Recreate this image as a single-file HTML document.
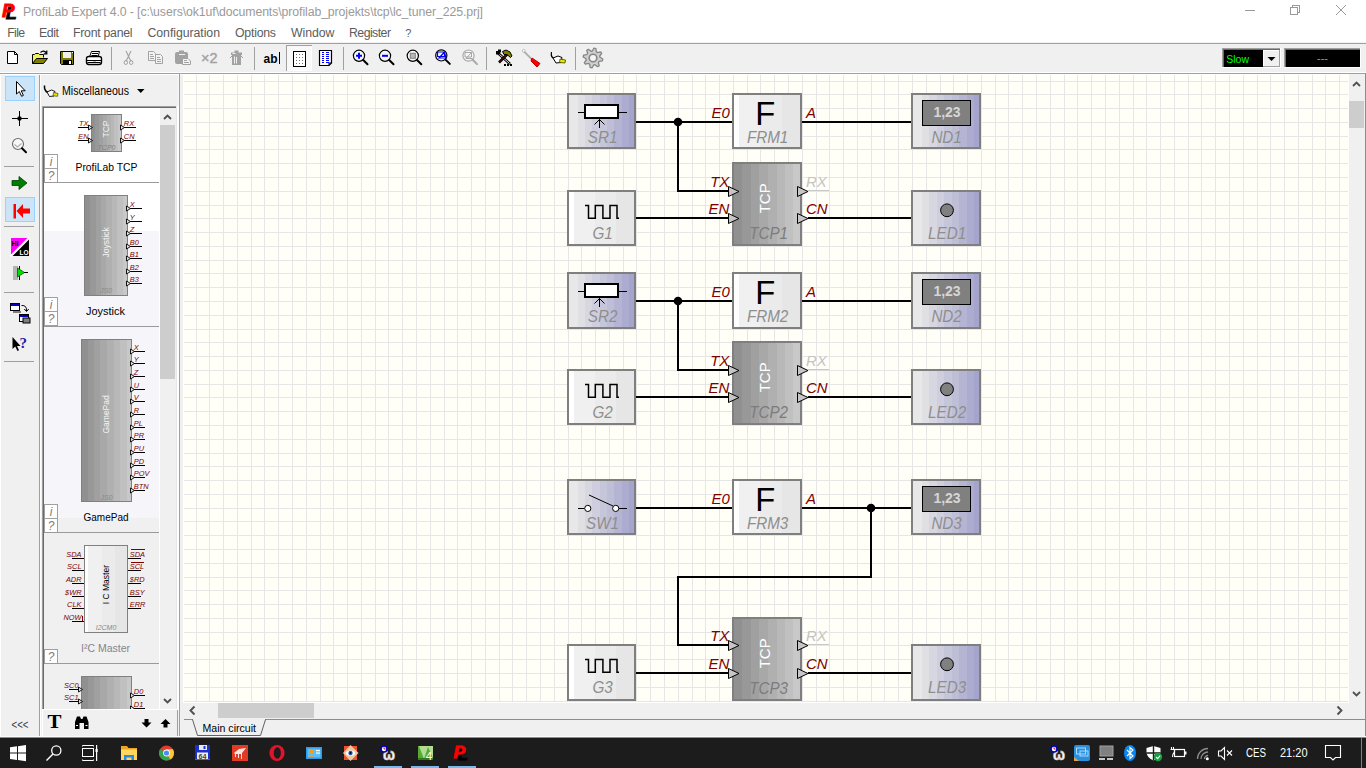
<!DOCTYPE html>
<html lang="en"><head><meta charset="utf-8"><title>ProfiLab Expert 4.0</title>
<style>
html,body{margin:0;padding:0;width:1366px;height:768px;overflow:hidden;background:#f0f0f0}
svg{display:block;font-family:'Liberation Sans',sans-serif}
text{white-space:pre}
</style></head><body>
<svg width="1366" height="768" viewBox="0 0 1366 768">
<defs>
<linearGradient id="gA" x1="0" x2="1" y1="0" y2="0"><stop offset="0.000" stop-color="#e8e8e8"/><stop offset="0.137" stop-color="#e8e8e8"/><stop offset="0.137" stop-color="#e0e0e4"/><stop offset="0.245" stop-color="#e0e0e4"/><stop offset="0.245" stop-color="#d7d7e1"/><stop offset="0.358" stop-color="#d7d7e1"/><stop offset="0.358" stop-color="#cecede"/><stop offset="0.471" stop-color="#cecede"/><stop offset="0.471" stop-color="#c6c6da"/><stop offset="0.589" stop-color="#c6c6da"/><stop offset="0.589" stop-color="#bebed6"/><stop offset="0.692" stop-color="#bebed6"/><stop offset="0.692" stop-color="#b5b5d3"/><stop offset="0.815" stop-color="#b5b5d3"/><stop offset="0.815" stop-color="#acacd0"/><stop offset="0.918" stop-color="#acacd0"/><stop offset="0.918" stop-color="#a4a4cc"/><stop offset="1.000" stop-color="#a4a4cc"/></linearGradient>
<linearGradient id="gB" x1="0" x2="1" y1="0" y2="0"><stop offset="0.000" stop-color="#ffffff"/><stop offset="0.077" stop-color="#ffffff"/><stop offset="0.077" stop-color="#f0f0f0"/><stop offset="0.400" stop-color="#f0f0f0"/><stop offset="0.400" stop-color="#ebebeb"/><stop offset="0.720" stop-color="#ebebeb"/><stop offset="0.720" stop-color="#e6e6e6"/><stop offset="1.000" stop-color="#e6e6e6"/></linearGradient>
<linearGradient id="gC" x1="0" x2="1" y1="0" y2="0"><stop offset="0.000" stop-color="#909090"/><stop offset="0.121" stop-color="#909090"/><stop offset="0.121" stop-color="#989898"/><stop offset="0.258" stop-color="#989898"/><stop offset="0.258" stop-color="#a0a0a0"/><stop offset="0.374" stop-color="#a0a0a0"/><stop offset="0.374" stop-color="#a8a8a8"/><stop offset="0.508" stop-color="#a8a8a8"/><stop offset="0.508" stop-color="#b0b0b0"/><stop offset="0.645" stop-color="#b0b0b0"/><stop offset="0.645" stop-color="#b8b8b8"/><stop offset="0.766" stop-color="#b8b8b8"/><stop offset="0.766" stop-color="#c0c0c0"/><stop offset="0.900" stop-color="#c0c0c0"/><stop offset="0.900" stop-color="#c8c8c8"/><stop offset="1.000" stop-color="#c8c8c8"/></linearGradient>
</defs>
<rect x="0" y="0" width="1366" height="768" fill="#f0f0f0" />
<rect x="0" y="0" width="1366" height="43" fill="#ffffff" />
<rect x="0" y="42" width="1366" height="1" fill="#f2f2f2" />
<rect x="0" y="43" width="1366" height="1" fill="#a0a0a0" />
<rect x="0" y="72" width="1366" height="1" fill="#ffffff" />
<rect x="0" y="73" width="1366" height="1" fill="#a0a0a0" />
<rect x="0" y="74" width="1366" height="1" fill="#ffffff" />
<rect x="1365" y="73" width="1" height="665" fill="#8c8c8c" />
<rect x="0" y="75" width="1" height="662" fill="#ffffff" />
<g font-weight="bold" font-style="italic">
<text x="5.7" y="19" font-size="17" fill="#000" textLength="11" lengthAdjust="spacingAndGlyphs" stroke="#000" stroke-width="0.8">L</text>
<text x="2" y="16.5" font-size="17.5" fill="#ff0000" textLength="12.5" lengthAdjust="spacingAndGlyphs" stroke="#ff0000" stroke-width="0.8">P</text>
</g>
<text x="23" y="16.3" font-size="12.3" fill="#9a9a9a" textLength="460" lengthAdjust="spacing">ProfiLab Expert 4.0 - [c:\users\ok1uf\documents\profilab_projekts\tcp\lc_tuner_225.prj]</text>
<g stroke="#9a9a9a" stroke-width="1" fill="none" shape-rendering="crispEdges">
<path d="M1245 10.5 H1255"/>
<path d="M1290.5 7.5 H1297.5 V14.5 H1290.5 Z M1292.5 7.5 V5.5 H1299.5 V12.5 H1297.5"/>
</g>
<path d="M1336 5 L1346 15 M1346 5 L1336 15" stroke="#9a9a9a" stroke-width="1" fill="none"/>
<text x="7.3" y="37.2" font-size="12.3" fill="#5c5c5c" textLength="17.7" lengthAdjust="spacing">File</text>
<text x="39" y="37.2" font-size="12.3" fill="#5c5c5c" textLength="20" lengthAdjust="spacing">Edit</text>
<text x="73" y="37.2" font-size="12.3" fill="#5c5c5c" textLength="59.5" lengthAdjust="spacing">Front panel</text>
<text x="147.5" y="37.2" font-size="12.3" fill="#5c5c5c" textLength="72.5" lengthAdjust="spacing">Configuration</text>
<text x="235" y="37.2" font-size="12.3" fill="#5c5c5c" textLength="41" lengthAdjust="spacing">Options</text>
<text x="291" y="37.2" font-size="12.3" fill="#5c5c5c" textLength="43.5" lengthAdjust="spacing">Window</text>
<text x="349" y="37.2" font-size="12.3" fill="#5c5c5c" textLength="42" lengthAdjust="spacing">Register</text>
<text x="405.2" y="37.2" font-size="11" fill="#5c5c5c" >?</text>
<rect x="111" y="47" width="1" height="23" fill="#a0a0a0" />
<rect x="254" y="47" width="1" height="23" fill="#a0a0a0" />
<rect x="343" y="47" width="1" height="23" fill="#a0a0a0" />
<rect x="486" y="47" width="1" height="23" fill="#a0a0a0" />
<rect x="575" y="47" width="1" height="23" fill="#a0a0a0" />
<path d="M7.5 51.5 H14.5 L17.5 54.5 V63.5 H7.5 Z" fill="#fff" stroke="#000" stroke-width="1"/>
<path d="M14.5 51.5 V54.5 H17.5" fill="none" stroke="#000" stroke-width="1"/>
<path d="M32.5 63.5 V54.5 H34.5 L35.5 53.5 H38.5 L39.5 54.5 H43.5 V57.5" fill="#f0f060" stroke="#000" stroke-width="1"/>
<path d="M32.5 63.5 L36.5 58.5 H47.5 L43.5 63.5 Z" fill="#808000" stroke="#000" stroke-width="1"/>
<path d="M40.5 52.5 Q43.5 49.500 46.5 53 M46.8 50.5 V53.800 H43.8" fill="none" stroke="#000" stroke-width="1.2"/>
<path d="M60.5 51.5 H73.5 V64.5 H61.5 L60.5 63.5 Z" fill="#808000" stroke="#000" stroke-width="1"/>
<rect x="63" y="52" width="8" height="6" fill="#f0f0f0" />
<rect x="63" y="60" width="9" height="5" fill="#000" />
<rect x="69" y="61" width="2" height="3" fill="#fff" />
<rect x="72" y="52" width="1" height="1" fill="#fff" />
<path d="M89.5 57 L91.5 51.5 H99.5 L98 57" fill="#fff" stroke="#000" stroke-width="1"/>
<path d="M92 53.5 H98 M91.5 55.5 H97.5" stroke="#000" stroke-width="1"/>
<path d="M86.5 58.5 Q86.5 56.5 89 56.5 H99 Q101.5 56.5 101.5 58.5 V62 Q101.5 64.5 99 64.5 H89 Q86.5 64.5 86.5 62 Z" fill="#fff" stroke="#000" stroke-width="1.4"/>
<path d="M87 60.5 H101 M87.5 62.5 H100.5" stroke="#000" stroke-width="1"/>
<rect x="93" y="61" width="3" height="1" fill="#e0e000" />
<path d="M126 51 L131 61.5 M131 51 L126 61.5" stroke="#a2a2a2" stroke-width="1.1" fill="none"/>
<ellipse cx="125.8" cy="62.5" rx="1.7" ry="2" fill="none" stroke="#a2a2a2" stroke-width="1"/><ellipse cx="131.2" cy="62.5" rx="1.7" ry="2" fill="none" stroke="#a2a2a2" stroke-width="1"/>
<path d="M148.5 51.5 H153.5 L155.5 53.5 V60.5 H148.5 Z M155.5 54.5 H160.5 L162.5 56.5 V63.5 H155.5 Z" fill="#f4f4f4" stroke="#a2a2a2" stroke-width="1"/>
<path d="M150 54.5 H153 M150 56.5 H154 M150 58.5 H154 M157 57.5 H160 M157 59.5 H161 M157 61.5 H161" stroke="#a2a2a2" stroke-width="1"/>
<rect x="175" y="52" width="13" height="12" rx="2" fill="#a2a2a2"/><rect x="179" y="50.5" width="5" height="3" fill="#a2a2a2"/><rect x="179" y="54" width="6" height="1" fill="#f0f0f0"/>
<path d="M182.5 58.5 H188 L190.5 61 V64.5 H182.5 Z" fill="#f4f4f4" stroke="#a2a2a2" stroke-width="1"/><path d="M184 60.5 H187 M184 62.5 H189" stroke="#a2a2a2" stroke-width="1"/>
<text x="201" y="63.3" font-size="15" fill="#a2a2a2" textLength="16.5" lengthAdjust="spacingAndGlyphs" stroke="#a2a2a2" stroke-width="0.4">×2</text>
<path d="M232 55 H241 V65 H232 Z M231 52.5 H242 V55 H231 Z M234.5 50.5 H238.5 V52.5 H234.5 Z" fill="#a2a2a2"/>
<path d="M230 58 L232 56 M243 58 L241 56" stroke="#a2a2a2" stroke-width="1"/>
<path d="M234.5 56.5 V63.5 M236.5 57 V63.5" stroke="#f0f0f0" stroke-width="1"/><rect x="232.5" y="53" width="3" height="1" fill="#f0f0f0"/>
<text x="263.5" y="62.8" font-size="12.5" fill="#000" font-weight="bold" textLength="14" lengthAdjust="spacingAndGlyphs">ab</text>
<rect x="279" y="52" width="1" height="12" fill="#000" />
<rect x="286" y="45" width="26" height="26" fill="#f8f8f8" />
<rect x="286" y="45" width="26" height="1" fill="#a0a0a0" />
<rect x="286" y="45" width="1" height="26" fill="#a0a0a0" />
<rect x="311" y="46" width="1" height="25" fill="#fff" />
<rect x="287" y="70" width="25" height="1" fill="#fff" />
<rect x="293.5" y="51.5" width="12" height="15" fill="#fff" stroke="#000" stroke-width="1"/>
<rect x="296" y="54" width="1" height="1" fill="#707070" />
<rect x="299" y="54" width="1" height="1" fill="#707070" />
<rect x="302" y="54" width="1" height="1" fill="#707070" />
<rect x="296" y="57" width="1" height="1" fill="#707070" />
<rect x="299" y="57" width="1" height="1" fill="#707070" />
<rect x="302" y="57" width="1" height="1" fill="#707070" />
<rect x="296" y="60" width="1" height="1" fill="#707070" />
<rect x="299" y="60" width="1" height="1" fill="#707070" />
<rect x="302" y="60" width="1" height="1" fill="#707070" />
<rect x="296" y="63" width="1" height="1" fill="#707070" />
<rect x="299" y="63" width="1" height="1" fill="#707070" />
<rect x="302" y="63" width="1" height="1" fill="#707070" />
<path d="M319.5 50.500 H331.5 V63 L329 65.5 H319.5 Z" fill="#fff" stroke="#000" stroke-width="1.2"/>
<path d="M329 65.5 V63 H331.5" fill="none" stroke="#000" stroke-width="1"/>
<rect x="322" y="52" width="2" height="1" fill="#0000ff" />
<rect x="326" y="52" width="3" height="1" fill="#0000ff" />
<rect x="322" y="54" width="2" height="1" fill="#0000ff" />
<rect x="326" y="54" width="3" height="1" fill="#0000ff" />
<rect x="322" y="56" width="2" height="1" fill="#0000ff" />
<rect x="326" y="56" width="3" height="1" fill="#0000ff" />
<rect x="322" y="58" width="2" height="1" fill="#0000ff" />
<rect x="326" y="58" width="3" height="1" fill="#0000ff" />
<rect x="322" y="60" width="2" height="1" fill="#0000ff" />
<rect x="326" y="60" width="3" height="1" fill="#0000ff" />
<rect x="322" y="62" width="2" height="1" fill="#0000ff" />
<rect x="326" y="62" width="3" height="1" fill="#0000ff" />
<circle cx="359" cy="55.8" r="5.6" fill="#f6f6f6" stroke="#000" stroke-width="1.2"/>
<path d="M363.2 60.0 L367.5 64.3" stroke="#000" stroke-width="2" stroke-linecap="round"/>
<path d="M356 55.8 H362 M359 52.8 V58.8" stroke="#0000ff" stroke-width="2"/>
<circle cx="385" cy="55.8" r="5.6" fill="#f6f6f6" stroke="#000" stroke-width="1.2"/>
<path d="M389.2 60.0 L393.5 64.3" stroke="#000" stroke-width="2" stroke-linecap="round"/>
<path d="M382 55.8 H388" stroke="#0000ff" stroke-width="2"/>
<circle cx="412.8" cy="55.8" r="5.6" fill="#f6f6f6" stroke="#000" stroke-width="1.2"/>
<path d="M417.0 60.0 L421.3 64.3" stroke="#000" stroke-width="2" stroke-linecap="round"/>
<rect x="410.3" y="53.3" width="5" height="5" fill="#b8b8b8" stroke="#808080" stroke-width="1"/>
<circle cx="441.3" cy="55.4" r="5.6" fill="#f6f6f6" stroke="#000" stroke-width="1.2"/>
<path d="M445.5 59.6 L449.8 63.9" stroke="#000" stroke-width="2" stroke-linecap="round"/>
<path d="M437.5 52 H444.5 V56.5 H437.5 Z M444.5 52 L439 58 H446 Z" fill="none" stroke="#0000ff" stroke-width="1.2"/>
<circle cx="468.5" cy="55.6" r="5.6" fill="#f6f6f6" stroke="#a8a8a8" stroke-width="1.2"/>
<path d="M472.7 59.800000000000004 L477.0 64.1" stroke="#a8a8a8" stroke-width="2" stroke-linecap="round"/>
<path d="M465 52.5 H471.5 V57 H465 Z M471.5 52.5 L466 58.5 H472.5" fill="none" stroke="#a8a8a8" stroke-width="1"/>
<path d="M498 53 L510 64" stroke="#000" stroke-width="2.6"/><path d="M498.5 53.5 L509.5 63.5" stroke="#fff" stroke-width="0.9"/>
<path d="M496 51 h2 v-1.5 h3 v3 h-1 v2 h-4 z" fill="#000"/>
<path d="M499 62.5 L508 53.5" stroke="#000" stroke-width="2.6"/><path d="M499.5 62 L507.5 54" stroke="#a00000" stroke-width="1"/>
<path d="M502.5 51.5 L506 50 L510 52 L512 56 L510.5 57.5 L507 54.5 L504 54.5 Z" fill="#808000" stroke="#000" stroke-width="1"/>
<rect x="504" y="64" width="2" height="2" fill="#000" />
<rect x="507" y="64" width="2" height="2" fill="#000" />
<rect x="510" y="64" width="2" height="2" fill="#000" />
<path d="M523.5 51 L532 59.5" stroke="#b0b0b0" stroke-width="1.8" stroke-linecap="round"/><circle cx="523.7" cy="50.8" r="1.4" fill="#fff" stroke="#b0b0b0" stroke-width="0.8"/>
<path d="M532 58 L540 63.5 L537 67 L531 61 Z" fill="#ff0000" stroke="#c00000" stroke-width="1" stroke-linejoin="round"/>
<path d="M551.5 52 Q550.5 57 554 58.5 L558 61.5" fill="none" stroke="#000" stroke-width="1.2"/>
<path d="M553 58 L558 56 L562 57.5 L561 62.5 L556 63 Z" fill="#fff" stroke="#000" stroke-width="1"/>
<path d="M560 59 L565.5 60 L565 63 L559.5 62.5 Z" fill="#e8e800" stroke="#404000" stroke-width="0.8"/>
<path d="M602.8 59.0 L602.4 60.9 L599.2 61.3 L598.4 62.5 L599.2 65.6 L597.6 66.7 L595.0 64.7 L593.7 65.0 L592.0 67.8 L590.1 67.4 L589.7 64.2 L588.5 63.4 L585.4 64.2 L584.3 62.6 L586.3 60.0 L586.0 58.7 L583.2 57.0 L583.6 55.1 L586.8 54.7 L587.6 53.5 L586.8 50.4 L588.4 49.3 L591.0 51.3 L592.3 51.0 L594.0 48.2 L595.9 48.6 L596.3 51.8 L597.5 52.6 L600.6 51.8 L601.7 53.4 L599.7 56.0 L600.0 57.3 Z" fill="#cfcfcf" stroke="#858585" stroke-width="1.3" stroke-linejoin="round"/>
<circle cx="593" cy="58" r="3.8" fill="#f4f4f4" stroke="#858585" stroke-width="1.6"/>
<rect x="1222" y="48" width="59" height="20" fill="#ffffff" />
<rect x="1222" y="48" width="58" height="1" fill="#a0a0a0" />
<rect x="1222" y="48" width="1" height="19" fill="#a0a0a0" />
<rect x="1223" y="49" width="57" height="1" fill="#696969" />
<rect x="1223" y="49" width="1" height="18" fill="#696969" />
<rect x="1224" y="50" width="56" height="17" fill="#000" />
<rect x="1263" y="50" width="17" height="17" fill="#a0a0a0" />
<rect x="1263" y="50" width="16" height="16" fill="#ffffff" />
<rect x="1264" y="51" width="15" height="15" fill="#f0f0f0" />
<path d="M1267.5 57 H1275.5 L1271.5 61 Z" fill="#000"/>
<text x="1226.3" y="62.5" font-size="11.5" fill="#00ff00" textLength="22.7" lengthAdjust="spacingAndGlyphs">Slow</text>
<rect x="1284" y="48" width="77" height="20" fill="#ffffff" />
<rect x="1284" y="48" width="76" height="1" fill="#a0a0a0" />
<rect x="1284" y="48" width="1" height="19" fill="#a0a0a0" />
<rect x="1285" y="49" width="75" height="1" fill="#696969" />
<rect x="1285" y="49" width="1" height="18" fill="#696969" />
<rect x="1286" y="50" width="74" height="17" fill="#000" />
<text x="1322.5" y="62" font-size="11" fill="#00ff00" text-anchor="middle" >---</text>
<rect x="39" y="75" width="1" height="663" fill="#a0a0a0" />
<rect x="40" y="75" width="1" height="663" fill="#ffffff" />
<rect x="5.5" y="76.5" width="29" height="24" fill="#cce4f7" stroke="#99d1ff" stroke-width="1"/>
<path d="M16.5 81.5 V94 L19.3 91.5 L21.6 96.3 L23.4 95.4 L21.2 90.8 H25.2 Z" fill="#fff" stroke="#000" stroke-width="1" stroke-linejoin="miter"/>
<path d="M12 118.5 H28 M19.5 111 V126" stroke="#000" stroke-width="1"/><circle cx="19.5" cy="118.5" r="2.2" fill="#000"/>
<circle cx="18" cy="144" r="5.5" fill="#f8f8f8" stroke="#6a6a6a" stroke-width="1.1"/><path d="M14.5 144.5 L17.5 147 L21.5 143.5" fill="none" stroke="#b0b0b0" stroke-width="1.2"/><path d="M22 148.2 L26 152.2" stroke="#000" stroke-width="2" stroke-linecap="round"/>
<rect x="4" y="166" width="30" height="1" fill="#a0a0a0" />
<path d="M12 180.5 H19 V176.5 L27 183 L19 189.5 V185.5 H12 Z" fill="#008000" stroke="#004000" stroke-width="0.8"/>
<rect x="5.5" y="197.5" width="29" height="24" fill="#cce4f7" stroke="#99d1ff" stroke-width="1"/>
<path d="M30 208.5 H23 V204 L16.5 211 L23 218 V213.5 H30 Z" fill="#ff0000"/><rect x="13.5" y="204" width="2.5" height="14.5" fill="#ff0000"/>
<rect x="4" y="226" width="30" height="1" fill="#a0a0a0" />
<path d="M11 238 H29 L11 256 Z" fill="#ff00ff"/><path d="M29 238 V256 H11 Z" fill="#000"/><path d="M29.5 237.5 L10.5 256.5" stroke="#fff" stroke-width="2.2"/>
<text x="11.5" y="246" font-size="7" fill="#000" font-weight="bold" textLength="7" lengthAdjust="spacingAndGlyphs">HI</text>
<text x="19.5" y="255.3" font-size="7" fill="#fff" font-weight="bold" textLength="9" lengthAdjust="spacingAndGlyphs">LO</text>
<rect x="13" y="266" width="5" height="14" fill="#b4b4b4" />
<rect x="19" y="266" width="1" height="14" fill="#000" />
<path d="M17.5 268 L24.5 272.5 L17.5 277 Z" fill="#00e000" stroke="#006000" stroke-width="0.8"/>
<rect x="24" y="272" width="4" height="1" fill="#000" />
<rect x="4" y="292" width="30" height="1" fill="#a0a0a0" />
<rect x="10.5" y="303.5" width="9" height="7" fill="#fff" stroke="#000"/><rect x="11" y="304" width="8" height="2" fill="#0000c0"/><rect x="13" y="311" width="8" height="2" fill="#808080"/>
<rect x="19.5" y="314.5" width="9" height="7" fill="#fff" stroke="#000"/><rect x="20" y="315" width="8" height="2" fill="#0000c0"/><rect x="23" y="318" width="7" height="5" fill="#808080" stroke="#000" stroke-width="1"/>
<path d="M21.5 305.5 Q27 305 26.5 311 M24.3 309 L26.5 311.5 L28.7 309" fill="none" stroke="#000" stroke-width="1"/>
<path d="M12.5 337 V349 L15.2 346.5 L17.5 351 L19 350.2 L17 346 H20.5 Z" fill="#000"/>
<text x="19.5" y="348" font-size="15" fill="#2020a0" font-weight="bold" font-family="Liberation Serif, serif">?</text>
<rect x="4" y="361" width="30" height="1" fill="#a0a0a0" />
<text x="11.5" y="728.5" font-size="12" fill="#404040" textLength="17" lengthAdjust="spacingAndGlyphs">&lt;&lt;&lt;</text>
<path d="M44.5 85.500 Q44 91 48 92.500 L52 95.500" fill="none" stroke="#000" stroke-width="1.5"/><path d="M47 92 L51.5 90 L55 91.5 L54 96 L49.5 96.5 Z" fill="#fff" stroke="#000" stroke-width="0.9"/><path d="M53.5 92.5 L58 93.5 L57.5 96.3 L53 95.8 Z" fill="#e8e800" stroke="#404000" stroke-width="0.7"/>
<text x="62" y="94.9" font-size="12" fill="#000" textLength="67" lengthAdjust="spacingAndGlyphs">Miscellaneous</text>
<path d="M137 89 H144.5 L140.75 93 Z" fill="#000"/>
<rect x="42" y="106" width="135" height="603" fill="#ffffff" />
<rect x="44" y="108" width="116" height="123" fill="#ffffff" />
<rect x="44" y="231" width="116" height="287" fill="#f5f5fa" />
<rect x="44" y="518" width="116" height="191" fill="#f0f0f0" />
<rect x="42" y="106" width="135" height="1" fill="#a0a0a0" />
<rect x="42" y="106" width="1" height="603" fill="#a0a0a0" />
<rect x="43" y="107" width="133" height="1" fill="#696969" />
<rect x="43" y="107" width="1" height="602" fill="#696969" />
<rect x="176" y="106" width="1" height="603" fill="#e6e6e6" />
<rect x="177" y="106" width="2" height="605" fill="#ffffff" />
<rect x="178" y="75" width="1" height="31" fill="#f8f8f8" />
<rect x="159" y="108" width="1" height="601" fill="#ffffff" />
<rect x="160" y="108" width="16" height="601" fill="#f0f0f0" />
<rect x="160" y="125" width="15" height="254" fill="#cdcdcd" />
<path d="M164 119 L167.5 115.5 L171 119" fill="none" stroke="#505050" stroke-width="1.9"/>
<path d="M164 699 L167.5 702.5 L171 699" fill="none" stroke="#505050" stroke-width="1.9"/>
<rect x="91.5" y="114.5" width="30" height="37" fill="url(#gC)" stroke="#808080" stroke-width="1"/>
<text transform="translate(109,129) rotate(-90)" font-size="8.5" fill="#e8f4f4" text-anchor="middle">TCP</text>
<text x="106.5" y="150" font-size="7" fill="#808080" text-anchor="middle" font-style="italic" >TCP0</text>
<rect x="78" y="127.0" width="13" height="1" fill="#000" />
<path d="M88.5 125.0 L92.5 127.5 L88.5 130.0 Z" fill="#e0e0e0" stroke="#000" stroke-width="0.9"/>
<text x="88.5" y="125.5" font-size="7.4" fill="#800000" text-anchor="end" font-style="italic" >TX</text>
<rect x="78" y="140.0" width="13" height="1" fill="#000" />
<path d="M88.5 138.0 L92.5 140.5 L88.5 143.0 Z" fill="#e0e0e0" stroke="#000" stroke-width="0.9"/>
<text x="88.5" y="138.5" font-size="7.4" fill="#800000" text-anchor="end" font-style="italic" >EN</text>
<rect x="122" y="127.0" width="14" height="1" fill="#000" />
<path d="M120.5 125.0 L124.5 127.5 L120.5 130.0 Z" fill="#e0e0e0" stroke="#000" stroke-width="0.9"/>
<text x="123.8" y="125.5" font-size="7.4" fill="#800000" font-style="italic" >RX</text>
<rect x="122" y="140.0" width="14" height="1" fill="#000" />
<path d="M120.5 138.0 L124.5 140.5 L120.5 143.0 Z" fill="#e0e0e0" stroke="#000" stroke-width="0.9"/>
<text x="123.8" y="138.5" font-size="7.4" fill="#800000" font-style="italic" >CN</text>
<rect x="44.5" y="154.5" width="13" height="14" fill="#fff" stroke="#a0a0a0" stroke-width="1"/>
<text x="51" y="165.8" font-size="12" fill="#8a7a70" text-anchor="middle" font-style="italic" >i</text>
<rect x="44.5" y="168.5" width="13" height="14" fill="#fff" stroke="#a0a0a0" stroke-width="1"/>
<text x="51" y="179.8" font-size="12" fill="#8a7a70" text-anchor="middle" font-style="italic" >?</text>
<rect x="44" y="182" width="115" height="1" fill="#9a9a9a" />
<text x="106.5" y="170.8" font-size="11.3" fill="#000" text-anchor="middle" textLength="62" lengthAdjust="spacingAndGlyphs">ProfiLab TCP</text>
<rect x="84.5" y="195.5" width="43" height="100" fill="url(#gC)" stroke="#808080" stroke-width="1"/>
<text transform="translate(109.2,242.3) rotate(-90)" font-size="8.5" fill="#f4f4f4" text-anchor="middle">Joystick</text>
<text x="106" y="293" font-size="7" fill="#8a8a8a" text-anchor="middle" font-style="italic" >JS0</text>
<rect x="128" y="208.0" width="14" height="1" fill="#000" />
<path d="M126.5 206.0 L130.5 208.5 L126.5 211.0 Z" fill="#e0e0e0" stroke="#000" stroke-width="0.9"/>
<text x="129.8" y="206.5" font-size="7.4" fill="#800000" font-style="italic" >X</text>
<rect x="128" y="221.0" width="14" height="1" fill="#000" />
<path d="M126.5 219.0 L130.5 221.5 L126.5 224.0 Z" fill="#e0e0e0" stroke="#000" stroke-width="0.9"/>
<text x="129.8" y="219.5" font-size="7.4" fill="#800000" font-style="italic" >Y</text>
<rect x="128" y="233.0" width="14" height="1" fill="#000" />
<path d="M126.5 231.0 L130.5 233.5 L126.5 236.0 Z" fill="#e0e0e0" stroke="#000" stroke-width="0.9"/>
<text x="129.8" y="231.5" font-size="7.4" fill="#800000" font-style="italic" >Z</text>
<rect x="128" y="246.0" width="14" height="1" fill="#000" />
<path d="M126.5 244.0 L130.5 246.5 L126.5 249.0 Z" fill="#e0e0e0" stroke="#000" stroke-width="0.9"/>
<text x="129.8" y="244.5" font-size="7.4" fill="#800000" font-style="italic" >B0</text>
<rect x="128" y="258.0" width="14" height="1" fill="#000" />
<path d="M126.5 256.0 L130.5 258.5 L126.5 261.0 Z" fill="#e0e0e0" stroke="#000" stroke-width="0.9"/>
<text x="129.8" y="256.5" font-size="7.4" fill="#800000" font-style="italic" >B1</text>
<rect x="128" y="271.0" width="14" height="1" fill="#000" />
<path d="M126.5 269.0 L130.5 271.5 L126.5 274.0 Z" fill="#e0e0e0" stroke="#000" stroke-width="0.9"/>
<text x="129.8" y="269.5" font-size="7.4" fill="#800000" font-style="italic" >B2</text>
<rect x="128" y="283.0" width="14" height="1" fill="#000" />
<path d="M126.5 281.0 L130.5 283.5 L126.5 286.0 Z" fill="#e0e0e0" stroke="#000" stroke-width="0.9"/>
<text x="129.8" y="281.5" font-size="7.4" fill="#800000" font-style="italic" >B3</text>
<rect x="44.5" y="297.5" width="13" height="14" fill="#fff" stroke="#a0a0a0" stroke-width="1"/>
<text x="51" y="308.8" font-size="12" fill="#8a7a70" text-anchor="middle" font-style="italic" >i</text>
<rect x="44.5" y="311.5" width="13" height="14" fill="#fff" stroke="#a0a0a0" stroke-width="1"/>
<text x="51" y="322.8" font-size="12" fill="#8a7a70" text-anchor="middle" font-style="italic" >?</text>
<rect x="44" y="326" width="115" height="1" fill="#9a9a9a" />
<text x="105.5" y="314.8" font-size="11.3" fill="#000" text-anchor="middle" textLength="39" lengthAdjust="spacingAndGlyphs">Joystick</text>
<rect x="81.5" y="339.5" width="50" height="162" fill="url(#gC)" stroke="#808080" stroke-width="1"/>
<text transform="translate(109.2,414.4) rotate(-90)" font-size="8.5" fill="#f4f4f4" text-anchor="middle">GamePad</text>
<text x="106.5" y="500" font-size="7" fill="#8a8a8a" text-anchor="middle" font-style="italic" >JS0</text>
<rect x="132" y="351.0" width="13" height="1" fill="#000" />
<path d="M130.5 349.0 L134.5 351.5 L130.5 354.0 Z" fill="#e0e0e0" stroke="#000" stroke-width="0.9"/>
<text x="133.8" y="349.5" font-size="7.4" fill="#800000" font-style="italic" >X</text>
<rect x="132" y="363.0" width="13" height="1" fill="#000" />
<path d="M130.5 361.0 L134.5 363.5 L130.5 366.0 Z" fill="#e0e0e0" stroke="#000" stroke-width="0.9"/>
<text x="133.8" y="361.5" font-size="7.4" fill="#800000" font-style="italic" >Y</text>
<rect x="132" y="376.0" width="13" height="1" fill="#000" />
<path d="M130.5 374.0 L134.5 376.5 L130.5 379.0 Z" fill="#e0e0e0" stroke="#000" stroke-width="0.9"/>
<text x="133.8" y="374.5" font-size="7.4" fill="#800000" font-style="italic" >Z</text>
<rect x="132" y="389.0" width="13" height="1" fill="#000" />
<path d="M130.5 387.0 L134.5 389.5 L130.5 392.0 Z" fill="#e0e0e0" stroke="#000" stroke-width="0.9"/>
<text x="133.8" y="387.5" font-size="7.4" fill="#800000" font-style="italic" >U</text>
<rect x="132" y="401.0" width="13" height="1" fill="#000" />
<path d="M130.5 399.0 L134.5 401.5 L130.5 404.0 Z" fill="#e0e0e0" stroke="#000" stroke-width="0.9"/>
<text x="133.8" y="399.5" font-size="7.4" fill="#800000" font-style="italic" >V</text>
<rect x="132" y="414.0" width="13" height="1" fill="#000" />
<path d="M130.5 412.0 L134.5 414.5 L130.5 417.0 Z" fill="#e0e0e0" stroke="#000" stroke-width="0.9"/>
<text x="133.8" y="412.5" font-size="7.4" fill="#800000" font-style="italic" >R</text>
<rect x="132" y="427.0" width="13" height="1" fill="#000" />
<path d="M130.5 425.0 L134.5 427.5 L130.5 430.0 Z" fill="#e0e0e0" stroke="#000" stroke-width="0.9"/>
<text x="133.8" y="425.5" font-size="7.4" fill="#800000" font-style="italic" >PL</text>
<rect x="132" y="439.0" width="13" height="1" fill="#000" />
<path d="M130.5 437.0 L134.5 439.5 L130.5 442.0 Z" fill="#e0e0e0" stroke="#000" stroke-width="0.9"/>
<text x="133.8" y="437.5" font-size="7.4" fill="#800000" font-style="italic" >PR</text>
<rect x="132" y="452.0" width="13" height="1" fill="#000" />
<path d="M130.5 450.0 L134.5 452.5 L130.5 455.0 Z" fill="#e0e0e0" stroke="#000" stroke-width="0.9"/>
<text x="133.8" y="450.5" font-size="7.4" fill="#800000" font-style="italic" >PU</text>
<rect x="132" y="465.0" width="13" height="1" fill="#000" />
<path d="M130.5 463.0 L134.5 465.5 L130.5 468.0 Z" fill="#e0e0e0" stroke="#000" stroke-width="0.9"/>
<text x="133.8" y="463.5" font-size="7.4" fill="#800000" font-style="italic" >PD</text>
<rect x="132" y="477.0" width="13" height="1" fill="#000" />
<path d="M130.5 475.0 L134.5 477.5 L130.5 480.0 Z" fill="#e0e0e0" stroke="#000" stroke-width="0.9"/>
<text x="133.8" y="475.5" font-size="7.4" fill="#800000" font-style="italic" >POV</text>
<rect x="132" y="490.0" width="13" height="1" fill="#000" />
<path d="M130.5 488.0 L134.5 490.5 L130.5 493.0 Z" fill="#e0e0e0" stroke="#000" stroke-width="0.9"/>
<text x="133.8" y="488.5" font-size="7.4" fill="#800000" font-style="italic" >BTN</text>
<rect x="44.5" y="504.5" width="13" height="14" fill="#fff" stroke="#a0a0a0" stroke-width="1"/>
<text x="51" y="515.8" font-size="12" fill="#8a7a70" text-anchor="middle" font-style="italic" >i</text>
<rect x="44.5" y="518.5" width="13" height="14" fill="#fff" stroke="#a0a0a0" stroke-width="1"/>
<text x="51" y="529.8" font-size="12" fill="#8a7a70" text-anchor="middle" font-style="italic" >?</text>
<rect x="44" y="532" width="115" height="1" fill="#9a9a9a" />
<text x="106" y="521" font-size="11.3" fill="#000" text-anchor="middle" textLength="45" lengthAdjust="spacingAndGlyphs">GamePad</text>
<rect x="84.5" y="545.5" width="43" height="87" fill="url(#gB)" stroke="#808080" stroke-width="1"/>
<text transform="translate(109.3,584.6) rotate(-90)" font-size="8.5" fill="#000" text-anchor="middle">I C Master</text>
<text x="106" y="630" font-size="7" fill="#8a8a8a" text-anchor="middle" font-style="italic" >I2CM0</text>
<rect x="72" y="558.0" width="12" height="1" fill="#000" />
<text x="81.5" y="556.5" font-size="7.4" fill="#800000" text-anchor="end" font-style="italic" >SDA</text>
<rect x="72" y="570.0" width="12" height="1" fill="#000" />
<text x="81.5" y="568.5" font-size="7.4" fill="#800000" text-anchor="end" font-style="italic" >SCL</text>
<rect x="72" y="583.0" width="12" height="1" fill="#000" />
<text x="81.5" y="581.5" font-size="7.4" fill="#800000" text-anchor="end" font-style="italic" >ADR</text>
<rect x="72" y="596.0" width="12" height="1" fill="#000" />
<text x="81.5" y="594.5" font-size="7.4" fill="#800000" text-anchor="end" font-style="italic" >$WR</text>
<rect x="72" y="608.0" width="12" height="1" fill="#000" />
<text x="81.5" y="606.5" font-size="7.4" fill="#800000" text-anchor="end" font-style="italic" >CLK</text>
<rect x="72" y="621.0" width="12" height="1" fill="#000" />
<text x="81.5" y="619.5" font-size="7.4" fill="#800000" text-anchor="end" font-style="italic" >NOW</text>
<rect x="128" y="558.0" width="13" height="1" fill="#000" />
<text x="129.8" y="556.5" font-size="7.4" fill="#800000" font-style="italic" >SDA</text>
<rect x="128" y="570.0" width="13" height="1" fill="#000" />
<text x="129.8" y="568.5" font-size="7.4" fill="#800000" font-style="italic" >SCL</text>
<rect x="128" y="583.0" width="13" height="1" fill="#000" />
<text x="129.8" y="581.5" font-size="7.4" fill="#800000" font-style="italic" >$RD</text>
<rect x="128" y="596.0" width="13" height="1" fill="#000" />
<text x="129.8" y="594.5" font-size="7.4" fill="#800000" font-style="italic" >BSY</text>
<rect x="128" y="608.0" width="13" height="1" fill="#000" />
<text x="129.8" y="606.5" font-size="7.4" fill="#800000" font-style="italic" >ERR</text>
<rect x="131" y="549" width="14" height="1" fill="#800000" />
<rect x="131" y="562" width="13" height="1" fill="#800000" />
<rect x="82" y="616" width="1" height="5" fill="#800000" />
<rect x="44.5" y="649.5" width="13" height="14" fill="#fff" stroke="#a0a0a0" stroke-width="1"/>
<text x="51" y="660.8" font-size="12" fill="#8a7a70" text-anchor="middle" font-style="italic" >?</text>
<rect x="44" y="663" width="115" height="1" fill="#9a9a9a" />
<text x="105.5" y="651.5" font-size="11.3" fill="#84848e" text-anchor="middle" textLength="49" lengthAdjust="spacingAndGlyphs">I²C Master</text>
<rect x="81.5" y="676.5" width="50" height="39" fill="url(#gC)" stroke="#808080" stroke-width="1"/>
<rect x="69" y="689.0" width="12" height="1" fill="#000" />
<path d="M78.5 687.0 L82.5 689.5 L78.5 692.0 Z" fill="#e0e0e0" stroke="#000" stroke-width="0.9"/>
<text x="78.5" y="687.5" font-size="7.4" fill="#800000" text-anchor="end" font-style="italic" >SC0</text>
<rect x="69" y="701.0" width="12" height="1" fill="#000" />
<path d="M78.5 699.0 L82.5 701.5 L78.5 704.0 Z" fill="#e0e0e0" stroke="#000" stroke-width="0.9"/>
<text x="78.5" y="699.5" font-size="7.4" fill="#800000" text-anchor="end" font-style="italic" >SC1</text>
<rect x="132" y="695.0" width="13" height="1" fill="#000" />
<path d="M130.5 693.0 L134.5 695.5 L130.5 698.0 Z" fill="#e0e0e0" stroke="#000" stroke-width="0.9"/>
<text x="133.8" y="693.5" font-size="7.4" fill="#800000" font-style="italic" >D0</text>
<rect x="132" y="708.0" width="13" height="1" fill="#000" />
<path d="M130.5 706.0 L134.5 708.5 L130.5 711.0 Z" fill="#e0e0e0" stroke="#000" stroke-width="0.9"/>
<text x="133.8" y="706.5" font-size="7.4" fill="#800000" font-style="italic" >D1</text>
<rect x="42" y="709" width="136" height="29" fill="#f0f0f0" />
<rect x="42" y="709" width="136" height="1" fill="#ffffff" />
<rect x="42" y="710" width="1" height="26" fill="#ffffff" />
<rect x="42" y="736" width="136" height="1" fill="#a0a0a0" />
<rect x="177" y="710" width="1" height="26" fill="#a0a0a0" />
<text x="47.5" y="728" font-size="18" fill="#000" font-weight="bold" font-family="Liberation Serif, serif" textLength="14" lengthAdjust="spacingAndGlyphs">T</text>
<path d="M75 729 V722 L77 716.5 H80 L81 719 H82.5 L83.5 716.5 H86.5 L88.5 722 V729 H84 V723 H79.5 V729 Z" fill="#000"/>
<rect x="76" y="725" width="2" height="1" fill="#fff" />
<rect x="85.5" y="725" width="2" height="1" fill="#fff" />
<path d="M144.5 719 H148.5 V722.5 H151.5 L146.5 727.5 L141.5 722.5 H144.5 Z" fill="#000"/>
<path d="M163.5 727.5 H167.5 V724 H170.5 L165.5 719 L160.5 724 H163.5 Z" fill="#000"/>
<rect x="179" y="73" width="1" height="665" fill="#a0a0a0" />
<rect x="183" y="74" width="1" height="628" fill="#ffffff" />
<rect x="183" y="74" width="1166" height="1" fill="#ffffff" />
<rect x="184" y="75" width="1165" height="627" fill="#fffff8" />
<g fill="#e6e6e6" shape-rendering="crispEdges">
<rect x="196" y="75" width="1" height="627"/>
<rect x="209" y="75" width="1" height="627"/>
<rect x="223" y="75" width="1" height="627"/>
<rect x="237" y="75" width="1" height="627"/>
<rect x="251" y="75" width="1" height="627"/>
<rect x="264" y="75" width="1" height="627"/>
<rect x="278" y="75" width="1" height="627"/>
<rect x="292" y="75" width="1" height="627"/>
<rect x="306" y="75" width="1" height="627"/>
<rect x="320" y="75" width="1" height="627"/>
<rect x="333" y="75" width="1" height="627"/>
<rect x="347" y="75" width="1" height="627"/>
<rect x="361" y="75" width="1" height="627"/>
<rect x="375" y="75" width="1" height="627"/>
<rect x="388" y="75" width="1" height="627"/>
<rect x="402" y="75" width="1" height="627"/>
<rect x="416" y="75" width="1" height="627"/>
<rect x="430" y="75" width="1" height="627"/>
<rect x="444" y="75" width="1" height="627"/>
<rect x="457" y="75" width="1" height="627"/>
<rect x="471" y="75" width="1" height="627"/>
<rect x="485" y="75" width="1" height="627"/>
<rect x="499" y="75" width="1" height="627"/>
<rect x="512" y="75" width="1" height="627"/>
<rect x="526" y="75" width="1" height="627"/>
<rect x="540" y="75" width="1" height="627"/>
<rect x="554" y="75" width="1" height="627"/>
<rect x="568" y="75" width="1" height="627"/>
<rect x="581" y="75" width="1" height="627"/>
<rect x="595" y="75" width="1" height="627"/>
<rect x="609" y="75" width="1" height="627"/>
<rect x="623" y="75" width="1" height="627"/>
<rect x="636" y="75" width="1" height="627"/>
<rect x="650" y="75" width="1" height="627"/>
<rect x="664" y="75" width="1" height="627"/>
<rect x="678" y="75" width="1" height="627"/>
<rect x="692" y="75" width="1" height="627"/>
<rect x="705" y="75" width="1" height="627"/>
<rect x="719" y="75" width="1" height="627"/>
<rect x="733" y="75" width="1" height="627"/>
<rect x="747" y="75" width="1" height="627"/>
<rect x="760" y="75" width="1" height="627"/>
<rect x="774" y="75" width="1" height="627"/>
<rect x="788" y="75" width="1" height="627"/>
<rect x="802" y="75" width="1" height="627"/>
<rect x="816" y="75" width="1" height="627"/>
<rect x="829" y="75" width="1" height="627"/>
<rect x="843" y="75" width="1" height="627"/>
<rect x="857" y="75" width="1" height="627"/>
<rect x="871" y="75" width="1" height="627"/>
<rect x="884" y="75" width="1" height="627"/>
<rect x="898" y="75" width="1" height="627"/>
<rect x="912" y="75" width="1" height="627"/>
<rect x="926" y="75" width="1" height="627"/>
<rect x="940" y="75" width="1" height="627"/>
<rect x="953" y="75" width="1" height="627"/>
<rect x="967" y="75" width="1" height="627"/>
<rect x="981" y="75" width="1" height="627"/>
<rect x="995" y="75" width="1" height="627"/>
<rect x="1008" y="75" width="1" height="627"/>
<rect x="1022" y="75" width="1" height="627"/>
<rect x="1036" y="75" width="1" height="627"/>
<rect x="1050" y="75" width="1" height="627"/>
<rect x="1064" y="75" width="1" height="627"/>
<rect x="1077" y="75" width="1" height="627"/>
<rect x="1091" y="75" width="1" height="627"/>
<rect x="1105" y="75" width="1" height="627"/>
<rect x="1119" y="75" width="1" height="627"/>
<rect x="1133" y="75" width="1" height="627"/>
<rect x="1146" y="75" width="1" height="627"/>
<rect x="1160" y="75" width="1" height="627"/>
<rect x="1174" y="75" width="1" height="627"/>
<rect x="1188" y="75" width="1" height="627"/>
<rect x="1201" y="75" width="1" height="627"/>
<rect x="1215" y="75" width="1" height="627"/>
<rect x="1229" y="75" width="1" height="627"/>
<rect x="1243" y="75" width="1" height="627"/>
<rect x="1257" y="75" width="1" height="627"/>
<rect x="1270" y="75" width="1" height="627"/>
<rect x="1284" y="75" width="1" height="627"/>
<rect x="1298" y="75" width="1" height="627"/>
<rect x="1312" y="75" width="1" height="627"/>
<rect x="1325" y="75" width="1" height="627"/>
<rect x="1339" y="75" width="1" height="627"/>
<rect x="184" y="81" width="1164" height="1"/>
<rect x="184" y="94" width="1164" height="1"/>
<rect x="184" y="108" width="1164" height="1"/>
<rect x="184" y="122" width="1164" height="1"/>
<rect x="184" y="136" width="1164" height="1"/>
<rect x="184" y="149" width="1164" height="1"/>
<rect x="184" y="163" width="1164" height="1"/>
<rect x="184" y="177" width="1164" height="1"/>
<rect x="184" y="191" width="1164" height="1"/>
<rect x="184" y="205" width="1164" height="1"/>
<rect x="184" y="218" width="1164" height="1"/>
<rect x="184" y="232" width="1164" height="1"/>
<rect x="184" y="246" width="1164" height="1"/>
<rect x="184" y="260" width="1164" height="1"/>
<rect x="184" y="273" width="1164" height="1"/>
<rect x="184" y="287" width="1164" height="1"/>
<rect x="184" y="301" width="1164" height="1"/>
<rect x="184" y="315" width="1164" height="1"/>
<rect x="184" y="329" width="1164" height="1"/>
<rect x="184" y="342" width="1164" height="1"/>
<rect x="184" y="356" width="1164" height="1"/>
<rect x="184" y="370" width="1164" height="1"/>
<rect x="184" y="384" width="1164" height="1"/>
<rect x="184" y="397" width="1164" height="1"/>
<rect x="184" y="411" width="1164" height="1"/>
<rect x="184" y="425" width="1164" height="1"/>
<rect x="184" y="439" width="1164" height="1"/>
<rect x="184" y="453" width="1164" height="1"/>
<rect x="184" y="466" width="1164" height="1"/>
<rect x="184" y="480" width="1164" height="1"/>
<rect x="184" y="494" width="1164" height="1"/>
<rect x="184" y="508" width="1164" height="1"/>
<rect x="184" y="521" width="1164" height="1"/>
<rect x="184" y="535" width="1164" height="1"/>
<rect x="184" y="549" width="1164" height="1"/>
<rect x="184" y="563" width="1164" height="1"/>
<rect x="184" y="577" width="1164" height="1"/>
<rect x="184" y="590" width="1164" height="1"/>
<rect x="184" y="604" width="1164" height="1"/>
<rect x="184" y="618" width="1164" height="1"/>
<rect x="184" y="632" width="1164" height="1"/>
<rect x="184" y="645" width="1164" height="1"/>
<rect x="184" y="659" width="1164" height="1"/>
<rect x="184" y="673" width="1164" height="1"/>
<rect x="184" y="687" width="1164" height="1"/>
<rect x="184" y="701" width="1164" height="1"/>
</g>
<rect x="636" y="121" width="96" height="2" fill="#000"/>
<circle cx="678" cy="122" r="4.3" fill="#000"/>
<rect x="677" y="121" width="2" height="71" fill="#000"/>
<rect x="677" y="190" width="52" height="2" fill="#000"/>
<rect x="802" y="121" width="109" height="2" fill="#000"/>
<rect x="636" y="217" width="93" height="2" fill="#000"/>
<rect x="808" y="217" width="103" height="2" fill="#000"/>
<rect x="567" y="93" width="69" height="56" fill="#7f7f7f"/>
<rect x="569" y="95" width="65" height="52" fill="url(#gA)"/>
<rect x="585" y="105.0" width="33" height="13" fill="#fff" stroke="#000" stroke-width="2"/>
<rect x="578" y="112.0" width="6" height="1" fill="#000"/>
<rect x="619" y="112.0" width="8" height="1" fill="#000"/>
<path d="M599.5 119.0 V128.0 M594.5 124.5 L599.5 119.5 L604.5 124.5" fill="none" stroke="#000" stroke-width="1"/>
<text transform="translate(602.6,142.8) scale(0.97,1.0)" font-size="15.7" fill="#8e8e8e" text-anchor="middle" font-style="italic">SR1</text>
<rect x="732" y="93" width="70" height="56" fill="#7f7f7f"/>
<rect x="734" y="95" width="66" height="52" fill="url(#gB)"/>
<text transform="translate(765.3,125.0) scale(1.0,1.0)" font-size="32.8" fill="#000" text-anchor="middle">F</text>
<text transform="translate(767.6,142.8) scale(0.97,1.0)" font-size="15.7" fill="#8e8e8e" text-anchor="middle" font-style="italic">FRM1</text>
<rect x="911" y="93" width="70" height="56" fill="#7f7f7f"/>
<rect x="913" y="95" width="66" height="52" fill="url(#gA)"/>
<rect x="922" y="100.0" width="49" height="26" fill="#000"/>
<rect x="923" y="101.0" width="47" height="24" fill="#808080"/>
<text x="947" y="117.0" font-size="14" fill="#d6d6d6" text-anchor="middle" font-weight="bold" >1,23</text>
<text transform="translate(946.6,142.8) scale(0.97,1.0)" font-size="15.7" fill="#8e8e8e" text-anchor="middle" font-style="italic">ND1</text>
<rect x="732" y="162" width="70" height="84" fill="#7f7f7f"/>
<rect x="734" y="164" width="66" height="80" fill="url(#gC)"/>
<text transform="translate(769.5,198.3) rotate(-90)" font-size="15" fill="#fff" text-anchor="middle">TCP</text>
<text transform="translate(768.6,239.10000000000002) scale(0.97,1.0)" font-size="15.7" fill="#7c7c7c" text-anchor="middle" font-style="italic">TCP1</text>
<path d="M728.5 186.5 L739.0 191.5 L728.5 196.5 Z" fill="#c6c6c6" stroke="#000" stroke-width="1" stroke-linejoin="miter"/>
<path d="M728.5 213.5 L739.0 218.5 L728.5 223.5 Z" fill="#c6c6c6" stroke="#000" stroke-width="1" stroke-linejoin="miter"/>
<path d="M797.5 186.5 L808.0 191.5 L797.5 196.5 Z" fill="#c6c6c6" stroke="#000" stroke-width="1" stroke-linejoin="miter"/>
<path d="M797.5 213.5 L808.0 218.5 L797.5 223.5 Z" fill="#c6c6c6" stroke="#000" stroke-width="1" stroke-linejoin="miter"/>
<text transform="translate(729.3,186.7) scale(0.985,1.0)" font-size="15.2" fill="#800000" text-anchor="end" font-style="italic">TX</text>
<text transform="translate(729.3,213.7) scale(0.985,1.0)" font-size="15.2" fill="#800000" text-anchor="end" font-style="italic">EN</text>
<text transform="translate(806,186.7) scale(0.985,1.0)" font-size="15.2" fill="#c4c4c4" font-style="italic">RX</text>
<text transform="translate(806,213.7) scale(0.985,1.0)" font-size="15.2" fill="#800000" font-style="italic">CN</text>
<rect x="808" y="190" width="21" height="1" fill="#c8c8c8"/>
<rect x="567" y="190" width="69" height="56" fill="#7f7f7f"/>
<rect x="569" y="192" width="65" height="52" fill="url(#gB)"/>
<path d="M585 205.5 H588.5 V218.3 H595.3 V205.5 H602.9 V218.3 H610 V205.5 H617 V218.3 H619" fill="none" stroke="#000" stroke-width="1.5"/>
<text transform="translate(602.6,239.10000000000002) scale(0.97,1.0)" font-size="15.7" fill="#8e8e8e" text-anchor="middle" font-style="italic">G1</text>
<rect x="911" y="190" width="70" height="56" fill="#7f7f7f"/>
<rect x="913" y="192" width="66" height="52" fill="url(#gA)"/>
<circle cx="947" cy="210.3" r="6.4" fill="#808080" stroke="#000" stroke-width="1"/>
<text transform="translate(947.1,239.10000000000002) scale(0.97,1.0)" font-size="15.7" fill="#8e8e8e" text-anchor="middle" font-style="italic">LED1</text>
<text transform="translate(729.8,117.8) scale(0.985,1.0)" font-size="15.2" fill="#800000" text-anchor="end" font-style="italic">E0</text>
<text transform="translate(806,117.8) scale(0.985,1.0)" font-size="15.2" fill="#800000" font-style="italic">A</text>
<rect x="636" y="300" width="96" height="2" fill="#000"/>
<circle cx="678" cy="301" r="4.3" fill="#000"/>
<rect x="677" y="300" width="2" height="71" fill="#000"/>
<rect x="677" y="369" width="52" height="2" fill="#000"/>
<rect x="802" y="300" width="109" height="2" fill="#000"/>
<rect x="636" y="396" width="93" height="2" fill="#000"/>
<rect x="808" y="396" width="103" height="2" fill="#000"/>
<rect x="567" y="272" width="69" height="57" fill="#7f7f7f"/>
<rect x="569" y="274" width="65" height="53" fill="url(#gA)"/>
<rect x="585" y="284.0" width="33" height="13" fill="#fff" stroke="#000" stroke-width="2"/>
<rect x="578" y="291.0" width="6" height="1" fill="#000"/>
<rect x="619" y="291.0" width="8" height="1" fill="#000"/>
<path d="M599.5 298.0 V307.0 M594.5 303.5 L599.5 298.5 L604.5 303.5" fill="none" stroke="#000" stroke-width="1"/>
<text transform="translate(602.6,321.8) scale(0.97,1.0)" font-size="15.7" fill="#8e8e8e" text-anchor="middle" font-style="italic">SR2</text>
<rect x="732" y="272" width="70" height="57" fill="#7f7f7f"/>
<rect x="734" y="274" width="66" height="53" fill="url(#gB)"/>
<text transform="translate(765.3,304.0) scale(1.0,1.0)" font-size="32.8" fill="#000" text-anchor="middle">F</text>
<text transform="translate(767.6,321.8) scale(0.97,1.0)" font-size="15.7" fill="#8e8e8e" text-anchor="middle" font-style="italic">FRM2</text>
<rect x="911" y="272" width="70" height="57" fill="#7f7f7f"/>
<rect x="913" y="274" width="66" height="53" fill="url(#gA)"/>
<rect x="922" y="279.0" width="49" height="26" fill="#000"/>
<rect x="923" y="280.0" width="47" height="24" fill="#808080"/>
<text x="947" y="296.0" font-size="14" fill="#d6d6d6" text-anchor="middle" font-weight="bold" >1,23</text>
<text transform="translate(946.6,321.8) scale(0.97,1.0)" font-size="15.7" fill="#8e8e8e" text-anchor="middle" font-style="italic">ND2</text>
<rect x="732" y="341" width="70" height="84" fill="#7f7f7f"/>
<rect x="734" y="343" width="66" height="80" fill="url(#gC)"/>
<text transform="translate(769.5,377.3) rotate(-90)" font-size="15" fill="#fff" text-anchor="middle">TCP</text>
<text transform="translate(768.6,418.1) scale(0.97,1.0)" font-size="15.7" fill="#7c7c7c" text-anchor="middle" font-style="italic">TCP2</text>
<path d="M728.5 365.5 L739.0 370.5 L728.5 375.5 Z" fill="#c6c6c6" stroke="#000" stroke-width="1" stroke-linejoin="miter"/>
<path d="M728.5 392.5 L739.0 397.5 L728.5 402.5 Z" fill="#c6c6c6" stroke="#000" stroke-width="1" stroke-linejoin="miter"/>
<path d="M797.5 365.5 L808.0 370.5 L797.5 375.5 Z" fill="#c6c6c6" stroke="#000" stroke-width="1" stroke-linejoin="miter"/>
<path d="M797.5 392.5 L808.0 397.5 L797.5 402.5 Z" fill="#c6c6c6" stroke="#000" stroke-width="1" stroke-linejoin="miter"/>
<text transform="translate(729.3,365.7) scale(0.985,1.0)" font-size="15.2" fill="#800000" text-anchor="end" font-style="italic">TX</text>
<text transform="translate(729.3,392.7) scale(0.985,1.0)" font-size="15.2" fill="#800000" text-anchor="end" font-style="italic">EN</text>
<text transform="translate(806,365.7) scale(0.985,1.0)" font-size="15.2" fill="#c4c4c4" font-style="italic">RX</text>
<text transform="translate(806,392.7) scale(0.985,1.0)" font-size="15.2" fill="#800000" font-style="italic">CN</text>
<rect x="808" y="369" width="21" height="1" fill="#c8c8c8"/>
<rect x="567" y="369" width="69" height="56" fill="#7f7f7f"/>
<rect x="569" y="371" width="65" height="52" fill="url(#gB)"/>
<path d="M585 384.5 H588.5 V397.3 H595.3 V384.5 H602.9 V397.3 H610 V384.5 H617 V397.3 H619" fill="none" stroke="#000" stroke-width="1.5"/>
<text transform="translate(602.6,418.1) scale(0.97,1.0)" font-size="15.7" fill="#8e8e8e" text-anchor="middle" font-style="italic">G2</text>
<rect x="911" y="369" width="70" height="56" fill="#7f7f7f"/>
<rect x="913" y="371" width="66" height="52" fill="url(#gA)"/>
<circle cx="947" cy="389.3" r="6.4" fill="#808080" stroke="#000" stroke-width="1"/>
<text transform="translate(947.1,418.1) scale(0.97,1.0)" font-size="15.7" fill="#8e8e8e" text-anchor="middle" font-style="italic">LED2</text>
<text transform="translate(729.8,296.8) scale(0.985,1.0)" font-size="15.2" fill="#800000" text-anchor="end" font-style="italic">E0</text>
<text transform="translate(806,296.8) scale(0.985,1.0)" font-size="15.2" fill="#800000" font-style="italic">A</text>
<rect x="636" y="507" width="96" height="2" fill="#000"/>
<rect x="802" y="507" width="109" height="2" fill="#000"/>
<circle cx="871" cy="508" r="4.3" fill="#000"/>
<rect x="870" y="507" width="2" height="71" fill="#000"/>
<rect x="677" y="576" width="195" height="2" fill="#000"/>
<rect x="677" y="576" width="2" height="70" fill="#000"/>
<rect x="677" y="644" width="52" height="2" fill="#000"/>
<rect x="636" y="672" width="93" height="2" fill="#000"/>
<rect x="808" y="672" width="103" height="2" fill="#000"/>
<rect x="567" y="479" width="69" height="56" fill="#7f7f7f"/>
<rect x="569" y="481" width="65" height="52" fill="url(#gA)"/>
<path d="M578 508.5 H584.5 M619 508.5 H627 M589 495 L613 506" fill="none" stroke="#000" stroke-width="1"/>
<circle cx="587.8" cy="508.4" r="3.1" fill="#fff" stroke="#000" stroke-width="1"/>
<circle cx="615.7" cy="508.4" r="3.1" fill="#fff" stroke="#000" stroke-width="1"/>
<text transform="translate(602.6,528.8) scale(0.97,1.0)" font-size="15.7" fill="#8e8e8e" text-anchor="middle" font-style="italic">SW1</text>
<rect x="732" y="479" width="70" height="56" fill="#7f7f7f"/>
<rect x="734" y="481" width="66" height="52" fill="url(#gB)"/>
<text transform="translate(765.3,511.0) scale(1.0,1.0)" font-size="32.8" fill="#000" text-anchor="middle">F</text>
<text transform="translate(767.6,528.8) scale(0.97,1.0)" font-size="15.7" fill="#8e8e8e" text-anchor="middle" font-style="italic">FRM3</text>
<rect x="911" y="479" width="70" height="56" fill="#7f7f7f"/>
<rect x="913" y="481" width="66" height="52" fill="url(#gA)"/>
<rect x="922" y="486.0" width="49" height="26" fill="#000"/>
<rect x="923" y="487.0" width="47" height="24" fill="#808080"/>
<text x="947" y="503.0" font-size="14" fill="#d6d6d6" text-anchor="middle" font-weight="bold" >1,23</text>
<text transform="translate(946.6,528.8) scale(0.97,1.0)" font-size="15.7" fill="#8e8e8e" text-anchor="middle" font-style="italic">ND3</text>
<rect x="732" y="617" width="70" height="84" fill="#7f7f7f"/>
<rect x="734" y="619" width="66" height="80" fill="url(#gC)"/>
<text transform="translate(769.5,653.3) rotate(-90)" font-size="15" fill="#fff" text-anchor="middle">TCP</text>
<text transform="translate(768.6,694.0999999999999) scale(0.97,1.0)" font-size="15.7" fill="#7c7c7c" text-anchor="middle" font-style="italic">TCP3</text>
<path d="M728.5 640.5 L739.0 645.5 L728.5 650.5 Z" fill="#c6c6c6" stroke="#000" stroke-width="1" stroke-linejoin="miter"/>
<path d="M728.5 668.5 L739.0 673.5 L728.5 678.5 Z" fill="#c6c6c6" stroke="#000" stroke-width="1" stroke-linejoin="miter"/>
<path d="M797.5 640.5 L808.0 645.5 L797.5 650.5 Z" fill="#c6c6c6" stroke="#000" stroke-width="1" stroke-linejoin="miter"/>
<path d="M797.5 668.5 L808.0 673.5 L797.5 678.5 Z" fill="#c6c6c6" stroke="#000" stroke-width="1" stroke-linejoin="miter"/>
<text transform="translate(729.3,640.7) scale(0.985,1.0)" font-size="15.2" fill="#800000" text-anchor="end" font-style="italic">TX</text>
<text transform="translate(729.3,668.7) scale(0.985,1.0)" font-size="15.2" fill="#800000" text-anchor="end" font-style="italic">EN</text>
<text transform="translate(806,640.7) scale(0.985,1.0)" font-size="15.2" fill="#c4c4c4" font-style="italic">RX</text>
<text transform="translate(806,668.7) scale(0.985,1.0)" font-size="15.2" fill="#800000" font-style="italic">CN</text>
<rect x="808" y="644" width="21" height="1" fill="#c8c8c8"/>
<rect x="567" y="644" width="69" height="57" fill="#7f7f7f"/>
<rect x="569" y="646" width="65" height="53" fill="url(#gB)"/>
<path d="M585 659.5 H588.5 V672.3 H595.3 V659.5 H602.9 V672.3 H610 V659.5 H617 V672.3 H619" fill="none" stroke="#000" stroke-width="1.5"/>
<text transform="translate(602.6,693.0999999999999) scale(0.97,1.0)" font-size="15.7" fill="#8e8e8e" text-anchor="middle" font-style="italic">G3</text>
<rect x="911" y="644" width="70" height="57" fill="#7f7f7f"/>
<rect x="913" y="646" width="66" height="53" fill="url(#gA)"/>
<circle cx="947" cy="664.3" r="6.4" fill="#808080" stroke="#000" stroke-width="1"/>
<text transform="translate(947.1,693.0999999999999) scale(0.97,1.0)" font-size="15.7" fill="#8e8e8e" text-anchor="middle" font-style="italic">LED3</text>
<text transform="translate(729.8,503.8) scale(0.985,1.0)" font-size="15.2" fill="#800000" text-anchor="end" font-style="italic">E0</text>
<text transform="translate(806,503.8) scale(0.985,1.0)" font-size="15.2" fill="#800000" font-style="italic">A</text>
<rect x="1349" y="74" width="16" height="629" fill="#f0f0f0" />
<rect x="1349" y="101" width="15" height="27" fill="#cdcdcd" />
<path d="M1353 86 L1356.5 82.5 L1360 86" fill="none" stroke="#505050" stroke-width="1.8"/>
<path d="M1353 692 L1356.5 695.5 L1360 692" fill="none" stroke="#505050" stroke-width="1.8"/>
<rect x="183" y="702" width="1166" height="1" fill="#ffffff" />
<rect x="184" y="703" width="1164" height="16" fill="#f0f0f0" />
<rect x="218" y="703" width="96" height="15" fill="#cdcdcd" />
<path d="M194.5 706.5 L190.5 710.5 L194.5 714.5" fill="none" stroke="#505050" stroke-width="1.9"/>
<path d="M1337.5 706.5 L1341.5 710.5 L1337.5 714.5" fill="none" stroke="#505050" stroke-width="1.9"/>
<rect x="184" y="719" width="9" height="1" fill="#8c8c8c" />
<rect x="265" y="719" width="1100" height="1" fill="#8c8c8c" />
<path d="M192.5 719.5 L197.5 735.5 H260.5 L265.5 719.5" fill="none" stroke="#606060" stroke-width="1"/>
<text x="202.5" y="731.7" font-size="11.5" fill="#000" textLength="53.5" lengthAdjust="spacingAndGlyphs">Main circuit</text>
<rect x="0" y="736" width="1366" height="1" fill="#fafafa" />
<rect x="0" y="737" width="1366" height="1" fill="#8c8c8c" />
<rect x="0" y="738" width="1366" height="30" fill="#1c1c1c" />
<path d="M10 747.3 L17 746.3 V752.6 H10 Z M18 746.2 L26 745 V752.6 H18 Z M10 753.6 H17 V759.9 L10 758.9 Z M18 753.6 H26 V761.2 L18 760 Z" fill="#fff"/>
<circle cx="56.3" cy="750.5" r="4.6" fill="none" stroke="#fff" stroke-width="1.3"/><path d="M53 754 L46.5 760.5" stroke="#fff" stroke-width="1.4"/>
<path d="M82.5 746.5 V745.5 H93.5 V746.5 M82.5 759.5 V760.5 H93.5 V759.5" fill="none" stroke="#fff" stroke-width="1"/><rect x="82.5" y="748.5" width="11" height="8" fill="none" stroke="#fff" stroke-width="1"/><rect x="96" y="745" width="1.2" height="16" fill="#fff"/><rect x="95.5" y="749" width="2.2" height="3" fill="#fff"/>
<path d="M121 746 H127 L128.5 748 H137 V760 H121 Z" fill="#e9a820"/><rect x="121" y="749.5" width="16" height="10.5" fill="#ffd75e"/><path d="M124 760 V755 H134 V760 H131.5 V757.5 H126.5 V760 Z" fill="#2a8ae0"/>
<circle cx="166.5" cy="753" r="7.5" fill="#e33b2e"/><path d="M166.5 753 L160 756.8 A7.5 7.5 0 0 0 170.3 759.5 Z" fill="#30a450"/><path d="M166.5 753 L170.3 759.5 A7.5 7.5 0 0 0 173 749.2 H166.5 Z" fill="#fcc934"/><path d="M166.5 753 L160 756.8 A7.5 7.5 0 0 1 160 749.2 Z" fill="#30a450"/><circle cx="166.5" cy="753" r="3.4" fill="#fff"/><circle cx="166.5" cy="753" r="2.6" fill="#4c8bf5"/>
<rect x="195" y="745" width="15" height="15" fill="#1a2fd0"/><rect x="199" y="745" width="8" height="5" fill="#e8e8f0"/><rect x="203.5" y="746" width="2" height="3" fill="#1a2fd0"/><rect x="197" y="752.5" width="11" height="6.5" fill="#f0f0f0"/><rect x="195" y="759" width="15" height="1" fill="#c04040"/>
<text x="202.5" y="758.6" font-size="7" fill="#404040" text-anchor="middle" font-weight="bold" >64</text>
<rect x="232" y="745" width="16" height="16" fill="#e23a24"/><path d="M234 753 L239 749 L246 748 L242 753 V759 H241 V754 H239 V758 H238 V754 H236 V757 H235 V754 Z" fill="#f4e8e4"/>
<ellipse cx="277" cy="753" rx="7.6" ry="8" fill="#e0142c"/><ellipse cx="277.3" cy="753" rx="3.6" ry="5.8" fill="#1c1c1c"/>
<rect x="306" y="747" width="16" height="12" fill="#2d9be8"/><rect x="307.5" y="748.5" width="13" height="9" fill="#5cc0f8"/><circle cx="311.5" cy="751.5" r="2.2" fill="#f0a020"/><rect x="316" y="750" width="4" height="1.2" fill="#fff"/><rect x="316" y="752.5" width="4" height="1.2" fill="#fff"/><rect x="308.5" y="755.5" width="5" height="1.2" fill="#f0a020"/>
<rect x="344" y="746" width="13" height="14" fill="#f05030"/><path d="M343 753 L350.5 745 L358.5 753 L350.5 761 Z" fill="#f0c8a0"/><ellipse cx="350.5" cy="753" rx="4.5" ry="2.6" fill="#fff"/><circle cx="350.5" cy="753" r="2.2" fill="#1060d0"/><circle cx="350.5" cy="753" r="0.9" fill="#000"/>
<text x="383" y="760" font-size="16" font-weight="bold" fill="#fff" stroke="#c8c8c8" stroke-width="0.7" textLength="12" lengthAdjust="spacingAndGlyphs">ω</text>
<circle cx="384" cy="749" r="3.8" fill="#0000c8"/><circle cx="384" cy="749" r="2.2" fill="#fff"/><path d="M384 747.3 V749 H385.6" stroke="#c00000" stroke-width="0.9" fill="none"/>
<rect x="418" y="746" width="15" height="14" fill="#58a838"/><path d="M419 746 L424 759 L428 747 L433 758 V746 Z" fill="#c8e8a8" opacity="0.8"/><rect x="418" y="758" width="15" height="2" fill="#2e7a1e"/>
<text x="429" y="760" font-size="11.5" fill="#fff" text-anchor="middle" >4</text>
<g font-weight="bold" font-style="italic"><text x="458" y="760" font-size="16" fill="#000" stroke="#000" stroke-width="0.8" textLength="10" lengthAdjust="spacingAndGlyphs">L</text><text x="453.5" y="757.5" font-size="16" fill="#ff0000" stroke="#ff0000" stroke-width="0.8" textLength="11.5" lengthAdjust="spacingAndGlyphs">P</text></g>
<rect x="374" y="766" width="28" height="2" fill="#76b9ed" />
<rect x="411" y="766" width="28" height="2" fill="#76b9ed" />
<rect x="448" y="766" width="28" height="2" fill="#76b9ed" />
<text x="1053" y="760" font-size="16" font-weight="bold" fill="#fff" stroke="#c8c8c8" stroke-width="0.7" textLength="12" lengthAdjust="spacingAndGlyphs">ω</text>
<circle cx="1054" cy="749" r="3.8" fill="#0000c8"/><circle cx="1054" cy="749" r="2.2" fill="#fff"/><path d="M1054 747.3 V749 H1055.6" stroke="#c00000" stroke-width="0.9" fill="none"/>
<rect x="1074" y="745" width="16" height="16" rx="2" fill="#2a8fdc"/><rect x="1076.5" y="748" width="9" height="6" fill="none" stroke="#a8dcff" stroke-width="1"/><rect x="1080" y="751" width="8" height="5" fill="none" stroke="#a8dcff" stroke-width="1"/><path d="M1074 757 L1079 761 H1074 Z" fill="#e8a040"/>
<rect x="1100" y="746" width="13" height="10" fill="#808080" stroke="#a0a0a0" stroke-width="1"/><rect x="1099" y="758" width="6" height="2" fill="#c8c8c8"/><rect x="1107" y="758" width="6" height="2" fill="#c8c8c8"/>
<ellipse cx="1130" cy="753" rx="6" ry="8" fill="#0a84f0"/><path d="M1127 750 L1133 756 L1130 758.5 V747.5 L1133 750 L1127 756" fill="none" stroke="#fff" stroke-width="1.1"/>
<path d="M1146.5 748 L1153.5 746 L1160.5 748 V752 Q1160 758 1153.5 760.5 Q1147 758 1146.5 752 Z" fill="#fff"/><path d="M1153.5 746 V760.5 M1146.5 753 H1160.5" stroke="#1c1c1c" stroke-width="1.4"/><circle cx="1158" cy="757" r="4.2" fill="#16a03c"/><path d="M1156 757 L1157.6 758.6 L1160.2 755.6" fill="none" stroke="#fff" stroke-width="1.1"/>
<rect x="1174.500" y="749.5" width="10" height="7" fill="none" stroke="#fff" stroke-width="1.2"/><rect x="1185" y="751.5" width="1.5" height="3" fill="#fff"/><path d="M1171.5 747 V749 M1173.5 747 V749 M1170.500 749.5 H1174.5 V752 Q1172.5 754 1172.5 757" fill="none" stroke="#fff" stroke-width="1.1"/>
<g fill="none" stroke="#8a8a8a" stroke-width="1.3"><path d="M1197.5 759 A10.5 10.5 0 0 1 1208 748.500"/><path d="M1201 759 A7 7 0 0 1 1208 752"/><path d="M1204.5 759 A3.500 3.500 0 0 1 1208 755.500"/></g><circle cx="1207.300" cy="758.7" r="1.5" fill="#fff"/>
<path d="M1218.500 751 H1221 L1224.500 747.5 V759.5 L1221 756 H1218.500 Z" fill="none" stroke="#fff" stroke-width="1.1"/><path d="M1227 750.5 L1232 755.5 M1232 750.5 L1227 755.500" stroke="#fff" stroke-width="1.1"/>
<text x="1246" y="757" font-size="12" fill="#fff" textLength="20" lengthAdjust="spacingAndGlyphs">CES</text>
<text x="1280" y="757" font-size="12" fill="#fff" textLength="27.5" lengthAdjust="spacingAndGlyphs">21:20</text>
<path d="M1325.500 745.5 H1340.500 V757.5 H1335.500 L1333 760 L1330.500 757.5 H1325.500 Z" fill="none" stroke="#fff" stroke-width="1.1"/>
<rect x="1361" y="738" width="1" height="30" fill="#808080" />
</svg>
</body></html>
